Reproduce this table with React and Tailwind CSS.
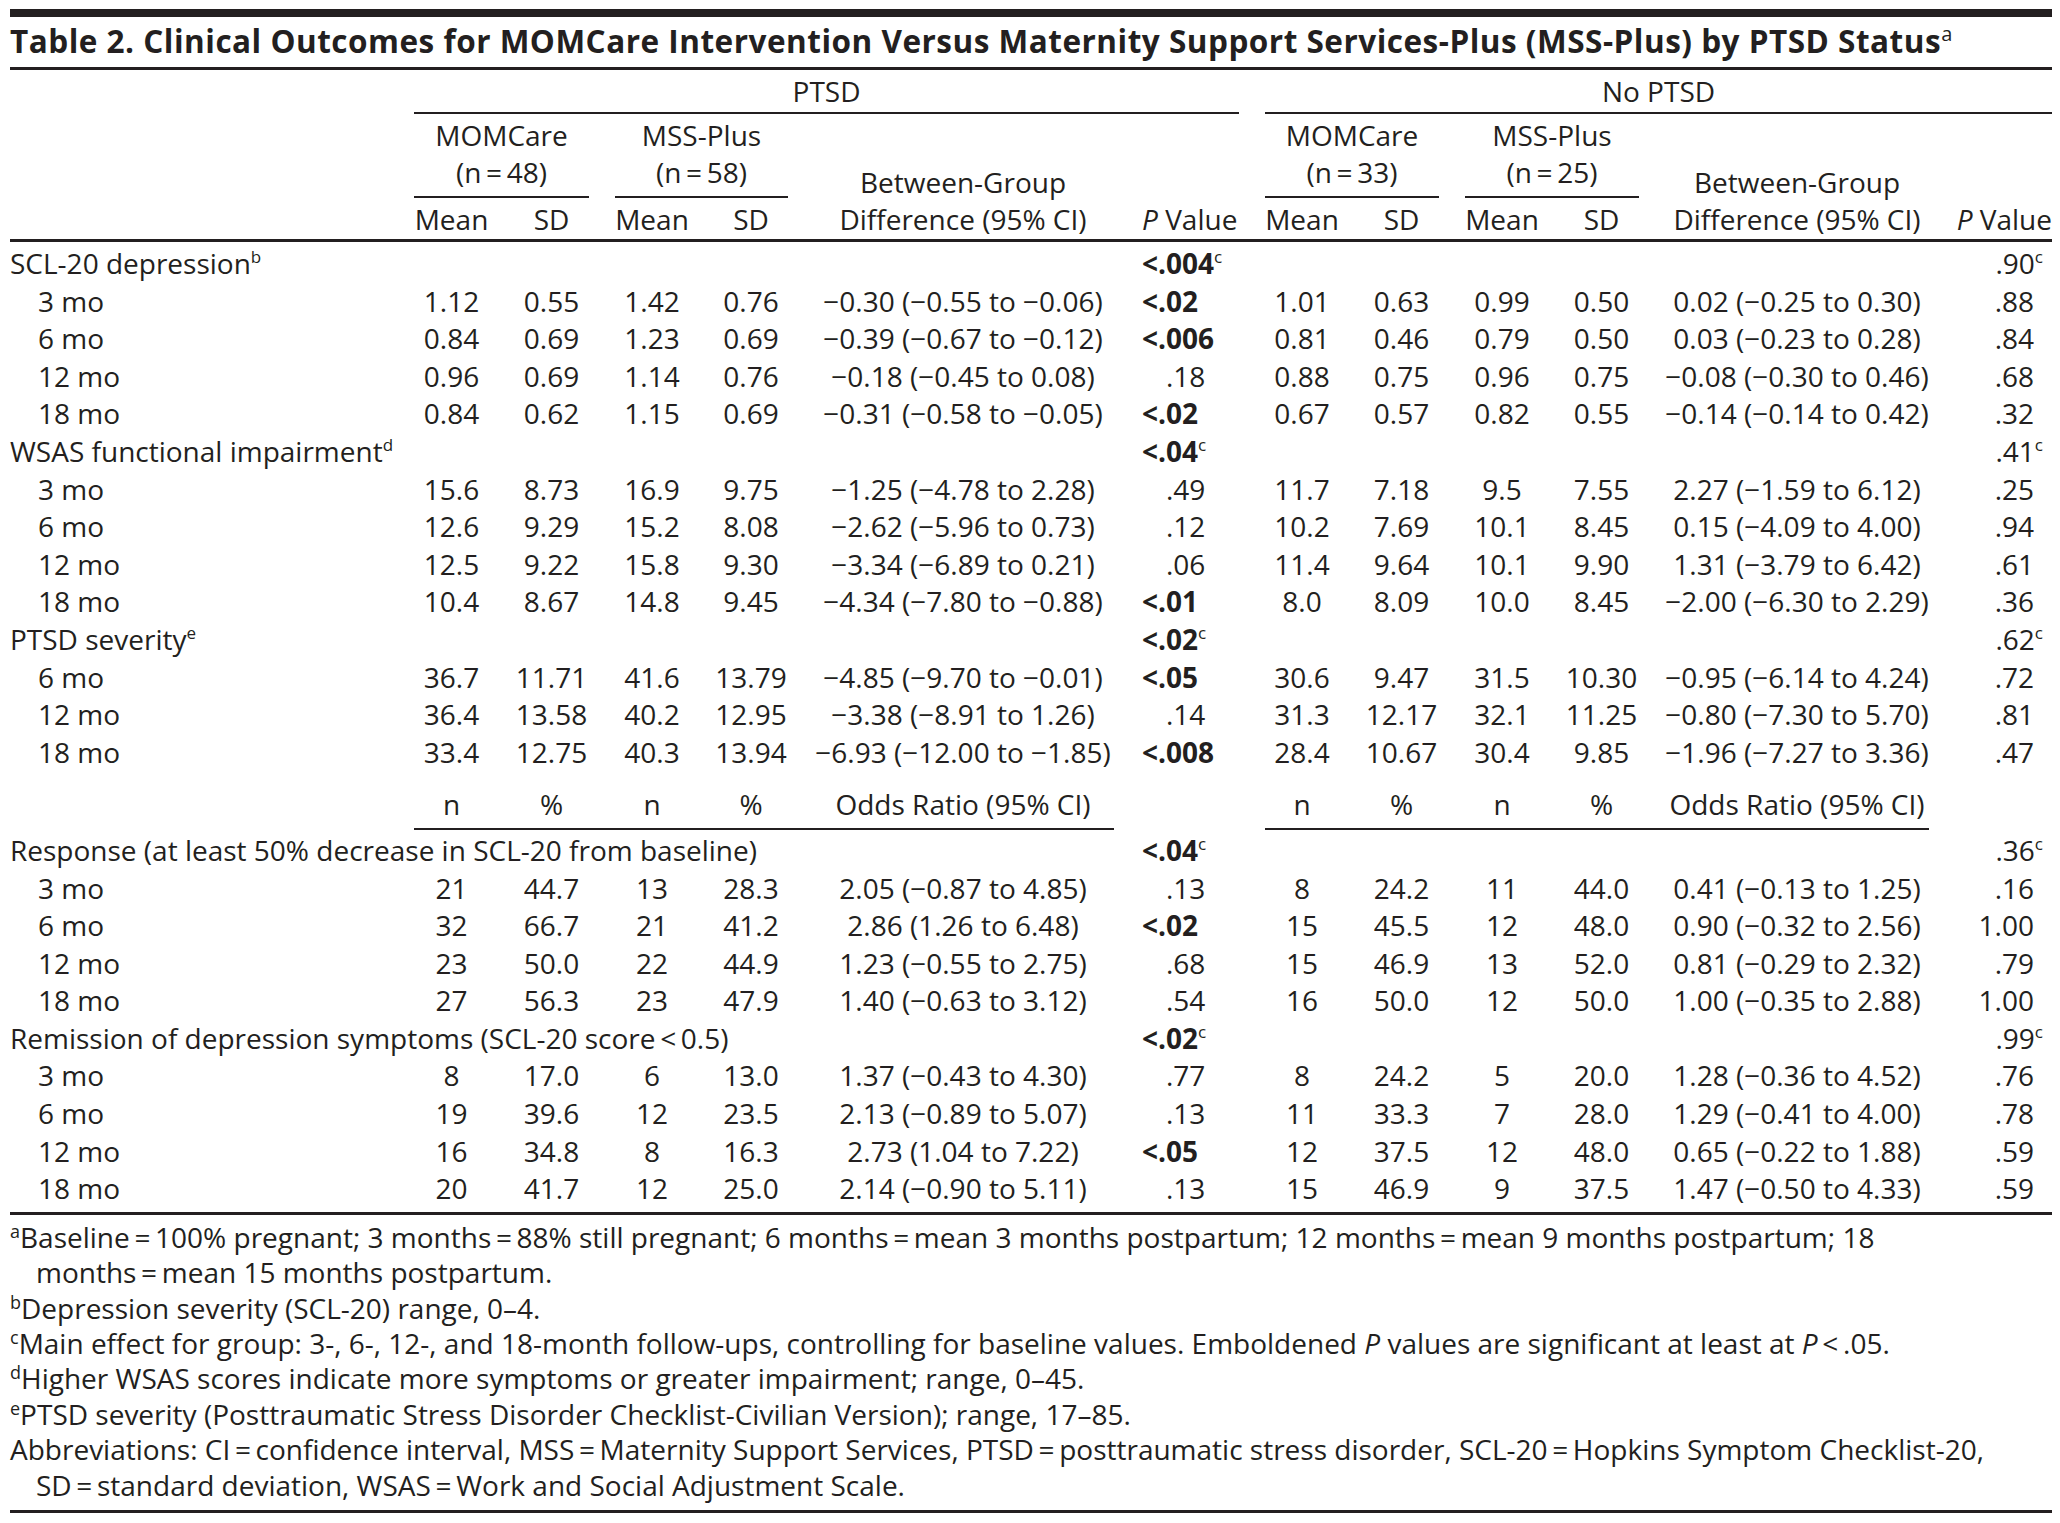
import React from 'react'

const T = '\u2009'

// P value for the PTSD side: "<" values start further left, plain ones indented
const PTSD_ROWS = [
  { label: 'SCL-20 depression', sup: 'b', p1: '<.004', p1s: 'c', p2: '.90', p2s: 'c' },
  { label: '3 mo', a: ['1.12', '0.55', '1.42', '0.76', '−0.30 (−0.55 to −0.06)'], p1: '<.02', b: ['1.01', '0.63', '0.99', '0.50', '0.02 (−0.25 to 0.30)'], p2: '.88' },
  { label: '6 mo', a: ['0.84', '0.69', '1.23', '0.69', '−0.39 (−0.67 to −0.12)'], p1: '<.006', b: ['0.81', '0.46', '0.79', '0.50', '0.03 (−0.23 to 0.28)'], p2: '.84' },
  { label: '12 mo', a: ['0.96', '0.69', '1.14', '0.76', '−0.18 (−0.45 to 0.08)'], p1: '.18', b: ['0.88', '0.75', '0.96', '0.75', '−0.08 (−0.30 to 0.46)'], p2: '.68' },
  { label: '18 mo', a: ['0.84', '0.62', '1.15', '0.69', '−0.31 (−0.58 to −0.05)'], p1: '<.02', b: ['0.67', '0.57', '0.82', '0.55', '−0.14 (−0.14 to 0.42)'], p2: '.32' },
  { label: 'WSAS functional impairment', sup: 'd', p1: '<.04', p1s: 'c', p2: '.41', p2s: 'c' },
  { label: '3 mo', a: ['15.6', '8.73', '16.9', '9.75', '−1.25 (−4.78 to 2.28)'], p1: '.49', b: ['11.7', '7.18', '9.5', '7.55', '2.27 (−1.59 to 6.12)'], p2: '.25' },
  { label: '6 mo', a: ['12.6', '9.29', '15.2', '8.08', '−2.62 (−5.96 to 0.73)'], p1: '.12', b: ['10.2', '7.69', '10.1', '8.45', '0.15 (−4.09 to 4.00)'], p2: '.94' },
  { label: '12 mo', a: ['12.5', '9.22', '15.8', '9.30', '−3.34 (−6.89 to 0.21)'], p1: '.06', b: ['11.4', '9.64', '10.1', '9.90', '1.31 (−3.79 to 6.42)'], p2: '.61' },
  { label: '18 mo', a: ['10.4', '8.67', '14.8', '9.45', '−4.34 (−7.80 to −0.88)'], p1: '<.01', b: ['8.0', '8.09', '10.0', '8.45', '−2.00 (−6.30 to 2.29)'], p2: '.36' },
  { label: 'PTSD severity', sup: 'e', p1: '<.02', p1s: 'c', p2: '.62', p2s: 'c' },
  { label: '6 mo', a: ['36.7', '11.71', '41.6', '13.79', '−4.85 (−9.70 to −0.01)'], p1: '<.05', b: ['30.6', '9.47', '31.5', '10.30', '−0.95 (−6.14 to 4.24)'], p2: '.72' },
  { label: '12 mo', a: ['36.4', '13.58', '40.2', '12.95', '−3.38 (−8.91 to 1.26)'], p1: '.14', b: ['31.3', '12.17', '32.1', '11.25', '−0.80 (−7.30 to 5.70)'], p2: '.81' },
  { label: '18 mo', a: ['33.4', '12.75', '40.3', '13.94', '−6.93 (−12.00 to −1.85)'], p1: '<.008', b: ['28.4', '10.67', '30.4', '9.85', '−1.96 (−7.27 to 3.36)'], p2: '.47' },
]

const ODDS_ROWS = [
  { label: 'Response (at least 50% decrease in SCL-20 from baseline)', p1: '<.04', p1s: 'c', p2: '.36', p2s: 'c' },
  { label: '3 mo', a: ['21', '44.7', '13', '28.3', '2.05 (−0.87 to 4.85)'], p1: '.13', b: ['8', '24.2', '11', '44.0', '0.41 (−0.13 to 1.25)'], p2: '.16' },
  { label: '6 mo', a: ['32', '66.7', '21', '41.2', '2.86 (1.26 to 6.48)'], p1: '<.02', b: ['15', '45.5', '12', '48.0', '0.90 (−0.32 to 2.56)'], p2: '1.00' },
  { label: '12 mo', a: ['23', '50.0', '22', '44.9', '1.23 (−0.55 to 2.75)'], p1: '.68', b: ['15', '46.9', '13', '52.0', '0.81 (−0.29 to 2.32)'], p2: '.79' },
  { label: '18 mo', a: ['27', '56.3', '23', '47.9', '1.40 (−0.63 to 3.12)'], p1: '.54', b: ['16', '50.0', '12', '50.0', '1.00 (−0.35 to 2.88)'], p2: '1.00' },
  { label: `Remission of depression symptoms (SCL-20 score${T}<${T}0.5)`, p1: '<.02', p1s: 'c', p2: '.99', p2s: 'c' },
  { label: '3 mo', a: ['8', '17.0', '6', '13.0', '1.37 (−0.43 to 4.30)'], p1: '.77', b: ['8', '24.2', '5', '20.0', '1.28 (−0.36 to 4.52)'], p2: '.76' },
  { label: '6 mo', a: ['19', '39.6', '12', '23.5', '2.13 (−0.89 to 5.07)'], p1: '.13', b: ['11', '33.3', '7', '28.0', '1.29 (−0.41 to 4.00)'], p2: '.78' },
  { label: '12 mo', a: ['16', '34.8', '8', '16.3', '2.73 (1.04 to 7.22)'], p1: '<.05', b: ['12', '37.5', '12', '48.0', '0.65 (−0.22 to 1.88)'], p2: '.59' },
  { label: '18 mo', a: ['20', '41.7', '12', '25.0', '2.14 (−0.90 to 5.11)'], p1: '.13', b: ['15', '46.9', '9', '37.5', '1.47 (−0.50 to 4.33)'], p2: '.59' },
]

function Sup({ children }) {
  return <sup className="top-[-11px] text-[17px] font-normal">{children}</sup>
}

function GroupA({ v }) {
  // PTSD side: mean, sd, mean, sd, difference
  return (
    <>
      <div className="w-[75px] text-center">{v[0]}</div>
      <div className="ml-[25px] w-[75px] text-center">{v[1]}</div>
      <div className="ml-[26px] w-[74px] text-center">{v[2]}</div>
      <div className="ml-[25px] w-[74px] text-center">{v[3]}</div>
      <div className="ml-[24px] w-[302px] text-center">{v[4]}</div>
    </>
  )
}

function GroupB({ v }) {
  // No PTSD side
  return (
    <>
      <div className="w-[74px] text-center">{v[0]}</div>
      <div className="ml-[25px] w-[75px] text-center">{v[1]}</div>
      <div className="ml-[26px] w-[74px] text-center">{v[2]}</div>
      <div className="ml-[25px] w-[75px] text-center">{v[3]}</div>
      <div className="ml-[26px] w-[264px] text-center">{v[4]}</div>
    </>
  )
}

function Row({ r }) {
  const lt = r.p1.startsWith('<')
  return (
    <div className="flex h-[37.6px] leading-[37.6px] whitespace-nowrap">
      <div className={r.a ? 'w-[404px] pl-[28px]' : 'w-[404px]'}>
        {r.label}
        {r.sup && <Sup>{r.sup}</Sup>}
      </div>
      {r.a ? <GroupA v={r.a} /> : <div className="w-[700px]" />}
      <div className={lt ? 'w-[125px] pl-[28px] font-bold' : 'w-[125px] pl-[52px]'}>
        {r.p1}
        {r.p1s && <Sup>{r.p1s}</Sup>}
      </div>
      <div className="ml-[26px] flex">
        {r.b ? <GroupB v={r.b} /> : <div className="w-[664px]" />}
      </div>
      <div className="w-[123px] pr-[18px] text-right">
        {r.p2}
        {r.p2s && <sup className="top-[-11px] mr-[-9px] text-[17px]">{r.p2s}</sup>}
      </div>
    </div>
  )
}

function GroupHead({ name, n, w, cols }) {
  return (
    <div className="flex flex-col" style={{ width: w }}>
      <div className="border-b-2 border-[#231f20] pt-[2.5px] pb-[5.5px] text-center leading-[37px]">
        <div>{name}</div>
        <div>
          (n{T}={T}{n})
        </div>
      </div>
      <div className="flex pt-[2.5px] leading-[37px]">{cols}</div>
    </div>
  )
}

function Footnote({ mark, children, cont }) {
  return (
    <div>
      <div className="whitespace-nowrap">
        {mark && <sup className="top-[-10px] text-[18px]">{mark}</sup>}
        {children}
      </div>
      {cont && <div className="whitespace-nowrap pl-[26px]">{cont}</div>}
    </div>
  )
}

export default function App() {
  return (
    <div className="min-h-screen bg-white font-['Open_Sans','Liberation_Sans',sans-serif] text-[#231f20]">
      <div className="ml-[10px] w-[2042px] pt-[9px]">
        <div className="h-[8px] bg-[#231f20]" />
        <div className="h-[50px] whitespace-nowrap pt-[3px] text-[31.5px] leading-[42px] font-bold tracking-[0.5px]">
          Table 2. Clinical Outcomes for MOMCare Intervention Versus Maternity Support Services-Plus (MSS-Plus) by PTSD Status
          <sup className="top-[-12px] text-[20px] font-normal tracking-normal">a</sup>
        </div>
        <div className="h-[3px] bg-[#231f20]" />

        <div className="text-[28px]">
          {/* header */}
          <div className="flex h-[44px] whitespace-nowrap">
            <div className="w-[404px]" />
            <div className="flex w-[825px] items-center justify-center border-b-2 border-[#231f20]">PTSD</div>
            <div className="ml-[26px] flex w-[787px] items-center justify-center border-b-2 border-[#231f20]">No PTSD</div>
          </div>
          <div className="flex h-[125px] whitespace-nowrap">
            <div className="w-[404px]" />
            <GroupHead
              name="MOMCare"
              n="48"
              w="175px"
              cols={
                <>
                  <div className="w-[75px] text-center">Mean</div>
                  <div className="ml-[25px] w-[75px] text-center">SD</div>
                </>
              }
            />
            <div className="ml-[26px]">
              <GroupHead
                name="MSS-Plus"
                n="58"
                w="173px"
                cols={
                  <>
                    <div className="w-[74px] text-center">Mean</div>
                    <div className="ml-[25px] w-[74px] text-center">SD</div>
                  </>
                }
              />
            </div>
            <div className="ml-[24px] flex w-[302px] flex-col justify-end pb-[1.5px] text-center leading-[37px]">
              <div>Between-Group</div>
              <div>Difference (95% CI)</div>
            </div>
            <div className="flex w-[125px] flex-col justify-end pb-[1.5px] pl-[28px] leading-[37px]">
              <div>
                <i>P</i> Value
              </div>
            </div>
            <div className="ml-[26px]">
              <GroupHead
                name="MOMCare"
                n="33"
                w="174px"
                cols={
                  <>
                    <div className="w-[74px] text-center">Mean</div>
                    <div className="ml-[25px] w-[75px] text-center">SD</div>
                  </>
                }
              />
            </div>
            <div className="ml-[26px]">
              <GroupHead
                name="MSS-Plus"
                n="25"
                w="174px"
                cols={
                  <>
                    <div className="w-[74px] text-center">Mean</div>
                    <div className="ml-[25px] w-[75px] text-center">SD</div>
                  </>
                }
              />
            </div>
            <div className="ml-[26px] flex w-[264px] flex-col justify-end pb-[1.5px] text-center leading-[37px]">
              <div>Between-Group</div>
              <div>Difference (95% CI)</div>
            </div>
            <div className="flex w-[123px] flex-col justify-end pb-[1.5px] text-right leading-[37px]">
              <div>
                <i>P</i> Value
              </div>
            </div>
          </div>
          <div className="h-[3px] bg-[#231f20]" />

          {/* continuous outcomes */}
          <div className="pt-[3px]">
            {PTSD_ROWS.map((r, i) => (
              <Row key={i} r={r} />
            ))}
          </div>

          {/* n / % subheader */}
          <div className="flex pt-[15px] leading-[37.6px] whitespace-nowrap">
            <div className="w-[404px]" />
            <div className="flex border-b-2 border-[#231f20] pb-[4px]">
              <GroupA v={['n', '%', 'n', '%', 'Odds Ratio (95% CI)']} />
            </div>
            <div className="w-[125px]" />
            <div className="ml-[26px] flex border-b-2 border-[#231f20] pb-[4px]">
              <GroupB v={['n', '%', 'n', '%', 'Odds Ratio (95% CI)']} />
            </div>
          </div>

          {/* binary outcomes */}
          <div className="pt-[2px]">
            {ODDS_ROWS.map((r, i) => (
              <Row key={i} r={r} />
            ))}
          </div>
        </div>

        <div className="mt-[4px] h-[3px] bg-[#231f20]" />

        {/* footnotes */}
        <div className="pt-[5px] pb-[7px] text-[28px] leading-[35.4px]">
          <Footnote
            mark="a"
            cont={`months${T}=${T}mean 15 months postpartum.`}
          >
            {`Baseline${T}=${T}100% pregnant; 3 months${T}=${T}88% still pregnant; 6 months${T}=${T}mean 3 months postpartum; 12 months${T}=${T}mean 9 months postpartum; 18`}
          </Footnote>
          <Footnote mark="b">Depression severity (SCL-20) range, 0–4.</Footnote>
          <Footnote mark="c">
            Main effect for group: 3-, 6-, 12-, and 18-month follow-ups, controlling for baseline values. Emboldened <i>P</i> values are significant at least at <i>P</i>
            {T}&lt;{T}.05.
          </Footnote>
          <Footnote mark="d">Higher WSAS scores indicate more symptoms or greater impairment; range, 0–45.</Footnote>
          <Footnote mark="e">PTSD severity (Posttraumatic Stress Disorder Checklist-Civilian Version); range, 17–85.</Footnote>
          <Footnote
            cont={`SD${T}=${T}standard deviation, WSAS${T}=${T}Work and Social Adjustment Scale.`}
          >
            {`Abbreviations: CI${T}=${T}confidence interval, MSS${T}=${T}Maternity Support Services, PTSD${T}=${T}posttraumatic stress disorder, SCL-20${T}=${T}Hopkins Symptom Checklist-20,`}
          </Footnote>
        </div>
        <div className="h-[3px] bg-[#231f20]" />
      </div>
    </div>
  )
}
